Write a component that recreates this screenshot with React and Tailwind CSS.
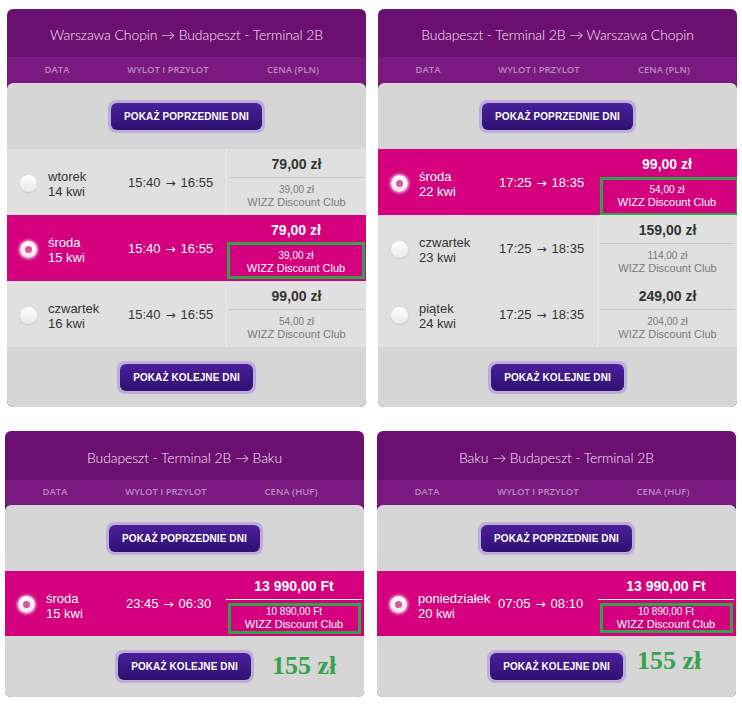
import React from 'react';

const cards = [
  {
    title: 'Warszawa Chopin → Budapeszt - Terminal 2B',
    cur: 'PLN',
    titleH: 'h-[48px]',
    headH: 'h-[26px]',
    rowH: 'h-[66px]',
    bottomH: 'h-[60px]',
    rows: [
      { d: 'wtorek', n: '14 kwi', t1: '15:40', t2: '16:55', p: '79,00 zł', dp: '39,00 zł' },
      { d: 'środa', n: '15 kwi', t1: '15:40', t2: '16:55', p: '79,00 zł', dp: '39,00 zł', sel: true, green: 'left-[1px] right-[1px] top-[27px] h-[37px]' },
      { d: 'czwartek', n: '16 kwi', t1: '15:40', t2: '16:55', p: '99,00 zł', dp: '54,00 zł' },
    ],
  },
  {
    title: 'Budapeszt - Terminal 2B → Warszawa Chopin',
    cur: 'PLN',
    titleH: 'h-[48px]',
    headH: 'h-[26px]',
    rowH: 'h-[66px]',
    bottomH: 'h-[60px]',
    rows: [
      { d: 'środa', n: '22 kwi', t1: '17:25', t2: '18:35', p: '99,00 zł', dp: '54,00 zł', sel: true, green: 'left-[3px] right-[-2px] top-[28px] h-[39px]' },
      { d: 'czwartek', n: '23 kwi', t1: '17:25', t2: '18:35', p: '159,00 zł', dp: '114,00 zł' },
      { d: 'piątek', n: '24 kwi', t1: '17:25', t2: '18:35', p: '249,00 zł', dp: '204,00 zł' },
    ],
  },
  {
    title: 'Budapeszt - Terminal 2B → Baku',
    cur: 'HUF',
    titleH: 'h-[49px]',
    headH: 'h-[25px]',
    rowH: 'h-[65px]',
    bottomH: 'h-[61px]',
    extra: 'left-[267px] top-[10px]',
    rows: [
      { d: 'środa', n: '15 kwi', t1: '23:45', t2: '06:30', p: '13 990,00 Ft', dp: '10 890,00 Ft', sel: true, line: true, green: 'left-[4px] right-[3px] top-[32px] h-[31px]' },
    ],
  },
  {
    title: 'Baku → Budapeszt - Terminal 2B',
    cur: 'HUF',
    titleH: 'h-[49px]',
    headH: 'h-[25px]',
    rowH: 'h-[65px]',
    bottomH: 'h-[61px]',
    extra: 'left-[260px] top-[5px]',
    rows: [
      { d: 'poniedziałek', n: '20 kwi', t1: '07:05', t2: '08:10', p: '13 990,00 Ft', dp: '10 890,00 Ft', sel: true, line: true, green: 'left-[4px] right-[3px] top-[32px] h-[30px]' },
    ],
  },
];

function Radio({ sel }) {
  if (sel) {
    return (
      <div className="w-[17px] h-[17px] rounded-full bg-linear-to-b from-white to-[#f3e3ee] flex items-center justify-center shadow-[0_0_3px_1px_rgba(255,255,255,0.75)]">
        <div className="w-[7px] h-[7px] rounded-full bg-[#d8569f]" />
      </div>
    );
  }
  return (
    <div className="w-[17px] h-[17px] rounded-full bg-linear-to-b from-white to-[#e9e9e9] shadow-[0_1px_2px_rgba(0,0,0,0.12)]" />
  );
}

function Button({ children, w }) {
  return (
    <div className={`rounded-[8px] p-[3px] bg-[#bcaed8] ${w}`}>
      <div className="h-[27px] rounded-[6px] bg-linear-to-b from-[#4a1f9c] to-[#2f1170] flex items-center justify-center text-white font-bold text-[10px] tracking-[0.1px]">
        {children}
      </div>
    </div>
  );
}

function Row({ r, h }) {
  const sel = r.sel;
  return (
    <div className={`relative flex ${h} ${sel ? 'bg-[#d5007d] text-white' : 'bg-[#e0e0e0] text-[#333333]'}`}>
      <div className="w-[41px] flex items-center pl-[13px] pt-[2px]">
        <Radio sel={sel} />
      </div>
      <div className="w-[80px] flex flex-col justify-center text-[13px] leading-[15px] pt-[4px] whitespace-nowrap">
        <div>{r.d}</div>
        <div>{r.n}</div>
      </div>
      <div className="w-[98px] flex items-center text-[13px] whitespace-nowrap pt-[1px]">
        {r.t1}
        <span className="mx-[5px] [font-family:'DejaVu_Sans',sans-serif] text-[12px]">→</span>
        {r.t2}
      </div>
      <div className={`relative w-[140px] flex flex-col ${sel ? '' : 'border-l border-[#ececec]'}`}>
        <div className={`h-[28px] flex items-center justify-center font-bold text-[14px] pt-[3px] ${sel ? 'text-white' : 'text-[#333333]'}`}>
          {r.p}
        </div>
        <div className={`mx-[2px] h-px ${r.line ? 'bg-white h-[2px]' : sel ? 'bg-transparent' : 'bg-[#c9c9c9]'}`} />
        <div className={`flex flex-col items-center pt-[6px] leading-[12px] ${sel ? 'text-white' : 'text-[#7a7a7a]'}`}>
          <div className="text-[10px]">{r.dp}</div>
          <div className="text-[11px]">WIZZ Discount Club</div>
        </div>
        {r.green && <div className={`absolute border-[3px] border-[#33a24b] ${r.green}`} />}
      </div>
    </div>
  );
}

function Card({ c }) {
  return (
    <div className="w-[359px] rounded-[6px] overflow-hidden bg-[#6b0f70] flex flex-col">
      <div className={`${c.titleH} flex items-center justify-center text-[#f6eaf6] text-[14px] font-light pt-[3px] tracking-[-0.1px] [font-family:Lato,'Open_Sans',sans-serif]`}>
        {c.title}
      </div>
      <div className={`${c.headH} bg-[#7a1a80] flex items-center text-[#b98bbd] text-[9.5px] font-semibold [font-family:'Open_Sans',sans-serif]`}>
        <div className="w-[100px] text-center">DATA</div>
        <div className="w-[122px] text-center">WYLOT I PRZYLOT</div>
        <div className="w-[128px] text-center">CENA ({c.cur})</div>
      </div>
      <div className="bg-[#d6d6d6] rounded-t-[6px] flex flex-col">
        <div className="h-[66px] flex items-center justify-center">
          <Button w="w-[157px]">POKAŻ POPRZEDNIE DNI</Button>
        </div>
        {c.rows.map((r, i) => (
          <Row key={i} r={r} h={c.rowH} />
        ))}
        <div className={`relative ${c.bottomH} flex items-center justify-center`}>
          <Button w="w-[139px]">POKAŻ KOLEJNE DNI</Button>
          {c.extra && (
            <div className={`absolute ${c.extra} text-[26px] font-bold text-[#35a24c] [font-family:'Liberation_Serif',serif]`}>
              155 zł
            </div>
          )}
        </div>
      </div>
    </div>
  );
}

export default function App() {
  return (
    <div className="w-[742px] h-[718px] bg-white [font-family:'Liberation_Sans',Arial,sans-serif]">
      <div className="flex items-start pt-[9px] pl-[7px] gap-[12px]">
        <Card c={cards[0]} />
        <Card c={cards[1]} />
      </div>
      <div className="flex items-start mt-[24px] pl-[5px] gap-[13px]">
        <Card c={cards[2]} />
        <Card c={cards[3]} />
      </div>
    </div>
  );
}
